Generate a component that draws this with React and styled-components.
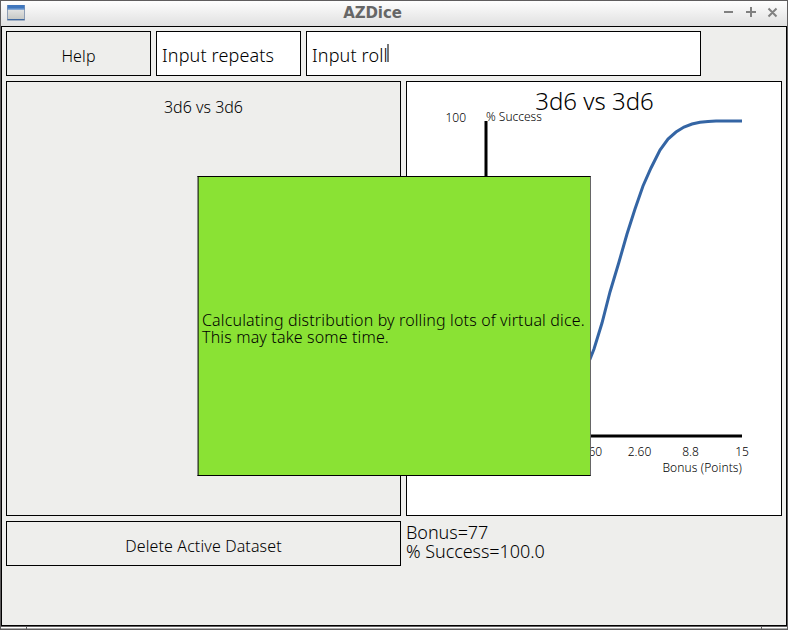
import React from "react";
import styled, { createGlobalStyle } from "styled-components";

const Global = createGlobalStyle`
  * { box-sizing: border-box; }
  body { margin: 0; overflow: hidden; }
`;

const Window = styled.div`
  position: relative;
  display: grid;
  grid-template-rows: 25px 600px 3px;
  width: 788px;
  height: 630px;
  border: 1px solid #5f5d5e;
  background: #eeeeec;
  color: #000;
  font-family: "Noto Sans", sans-serif;
  font-weight: 300;
`;

const TitleBar = styled.header`
  display: grid;
  grid-template-columns: 40px 1fr 66px;
  align-items: center;
  background: linear-gradient(#fefefe, #e0e0e0);
`;

const Title = styled.h1`
  margin: 0 0 2px;
  padding-right: 17px;
  text-align: center;
  font: bold 15px/20px "DejaVu Sans", sans-serif;
  letter-spacing: -0.1px;
  color: #666;
`;

const WindowIcon = styled.svg`
  display: block;
  width: 18px;
  height: 16px;
  margin: -1px 0 0 6px;
`;

const Controls = styled.svg`
  display: block;
  width: 66px;
  height: 25px;
`;

const Content = styled.main`
  display: flex;
  flex-direction: column;
  gap: 5px;
  padding: 4px;
  border: 1px solid #000;
`;

const Row = styled.div`
  display: flex;
  gap: 5px;
  height: ${(p) => p.$height}px;
`;

const Box = styled.div`
  flex: none;
  width: ${(p) => p.$width}px;
  border: 1px solid #000;
`;

const Button = styled.button`
  flex: none;
  width: ${(p) => p.$width}px;
  padding: 5px 0 0;
  border: 1px solid #000;
  background: transparent;
  color: #000;
  font: 300 16px/20px "Noto Sans", sans-serif;
  letter-spacing: 0.12px;
`;

const Field = styled(Box)`
  display: flex;
  align-items: center;
  padding: 3px 0 0 5px;
  background: #fff;
  font-size: 18px;
  line-height: 24px;
  letter-spacing: 0.15px;
`;

const Caret = styled.span`
  width: 2px;
  height: 18px;
  margin: -4px 0 0 -1px;
  background: #777;
`;

const DatasetPanel = styled(Box)`
  padding-top: 14px;
  text-align: center;
  font-size: 16px;
  line-height: 22px;
`;

const ChartPanel = styled(Box)`
  background: #fff;
`;

const Chart = styled.svg`
  display: block;
  font-family: "Noto Sans", sans-serif;
  font-weight: 300;
  font-size: 12px;
`;

const Readout = styled.div`
  padding-top: 2px;
  font-size: 18px;
  line-height: 19px;
  letter-spacing: -0.05px;
`;

const Notice = styled.div`
  position: absolute;
  left: 196px;
  top: 175px;
  width: 394px;
  height: 300px;
  display: flex;
  align-items: center;
  padding: 6px 0 0 4px;
  border: 1px solid #000;
  border-left-color: #888;
  border-right-color: #666;
  box-shadow: inset 1px 0 #3c5a20;
  background: #8ae234;
  font-size: 16px;
  line-height: 17px;
  letter-spacing: 0.15px;
  white-space: pre;
`;

const BottomGrip = styled.footer`
  display: grid;
  grid-template-columns: 25px 734px 1fr;
  gap: 1px;
  background: #5f5d5e;
  padding-top: 1px;
`;

const GripPart = styled.span`
  border-top: 1px solid #fff;
  background: #aaa;
`;

const ticks = [
  { x: 588.5, label: "-3.60" },
  { x: 639.5, label: "2.60" },
  { x: 690.5, label: "8.8" },
  { x: 742, label: "15" },
];

export default function App() {
  return (
    <Window>
      <Global />
      <TitleBar>
        <WindowIcon viewBox="0 0 18 16">
          <defs>
            <linearGradient id="pane" x2="0" y2="1">
              <stop stopColor="#eee" />
              <stop offset="1" stopColor="#c4c6c3" />
            </linearGradient>
          </defs>
          <rect x=".5" y=".5" width="17" height="14.5" fill="url(#pane)" stroke="#8d9db4" />
          <rect x=".5" width="17" height="4.5" fill="#3f76bd" />
          <rect x="1" y="3.5" width="16" height="1" fill="#7ba3d8" />
          <rect x=".5" y="14" width="17" height="1.2" fill="#4169a0" />
        </WindowIcon>
        <Title>AZDice</Title>
        <Controls viewBox="0 0 66 25" stroke="#808080" strokeWidth="2" fill="none">
          <path d="M3 11H12M25 11H35M30 6V16M47.5 7.5L55.5 15.5M55.5 7.5L47.5 15.5" />
        </Controls>
      </TitleBar>
      <Content>
        <Row $height={45}>
          <Button $width={145}>Help</Button>
          <Field $width={145}>Input repeats</Field>
          <Field $width={395}>
            Input roll
            <Caret />
          </Field>
        </Row>
        <Row $height={435}>
          <DatasetPanel $width={395}>3d6 vs 3d6</DatasetPanel>
          <ChartPanel $width={376}>
            <Chart width="374" height="433" viewBox="407 82 374 433">
              <text x="594.5" y="110" fontSize="24" textAnchor="middle">3d6 vs 3d6</text>
              <text x="445.5" y="122">100</text>
              <text x="486" y="121">% Success</text>
              <path d="M486 121V436H742" fill="none" stroke="#000" strokeWidth="3" />
              <path
                d="M486 435L520 431L550 415L570 395L590 359L594 349L602 323L610 292L619 262L627 234L635 209L643 186L651 168L660 150L668 139L676 132L684 127L692 124L700 122.3L708 121.4L716 121H742"
                fill="none"
                stroke="#3465a4"
                strokeWidth="3"
              />
              {ticks.map((t) => (
                <text key={t.label} x={t.x} y="456" textAnchor="middle">{t.label}</text>
              ))}
              <text x="742" y="472" textAnchor="end" letterSpacing=".1">Bonus (Points)</text>
            </Chart>
          </ChartPanel>
        </Row>
        <Row $height={45}>
          <Button $width={395}>Delete Active Dataset</Button>
          <Readout>
            <div>Bonus=77</div>
            <div>% Success=100.0</div>
          </Readout>
        </Row>
      </Content>
      <BottomGrip>
        <GripPart />
        <GripPart />
        <GripPart />
      </BottomGrip>
      <Notice>{"Calculating distribution by rolling lots of virtual dice.\nThis may take some time."}</Notice>
    </Window>
  );
}
